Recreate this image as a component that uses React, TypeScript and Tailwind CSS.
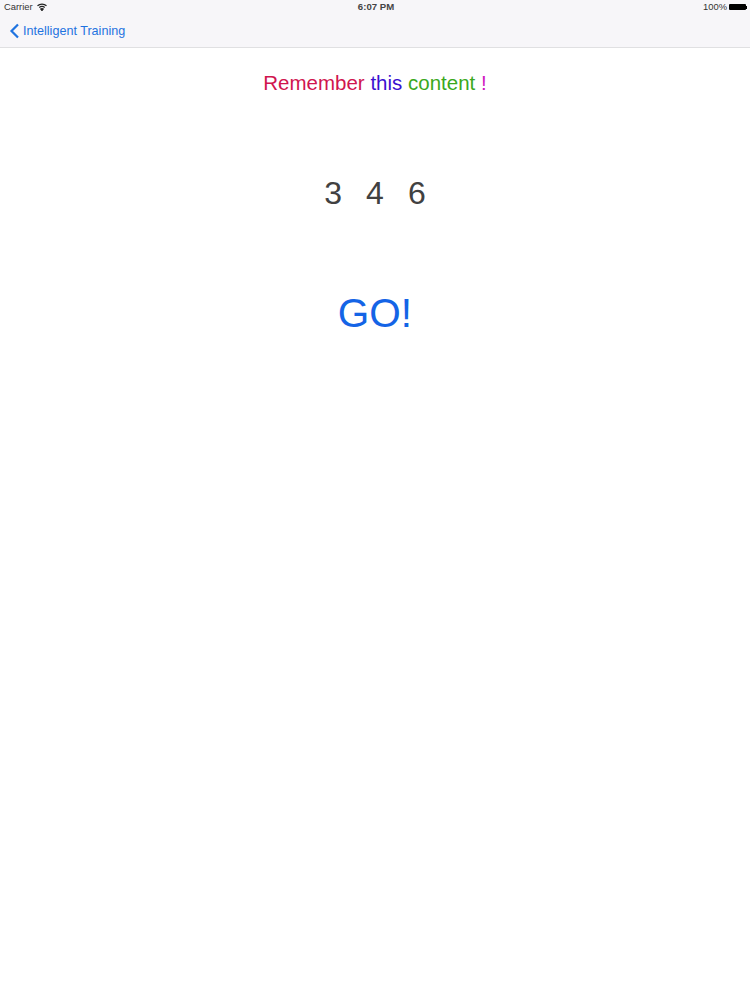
export default function App() {
  return (
    <div className="min-h-[1000px] bg-white font-['Liberation_Sans',sans-serif]">
      <div className="h-[48px] bg-[#f7f6f9] border-b border-[#e0e0e2]">
        <div className="relative flex h-[15px] items-center justify-between pl-[4px] pr-[3px] text-[9.4px] text-[#333]">
          <div className="flex items-center gap-[4px]">
            <span>Carrier</span>
            <svg width="10" height="8" viewBox="0 0 20 16" fill="none" stroke="#222" strokeWidth="2.4">
              <path d="M1 5.5 C6 1 14 1 19 5.5" />
              <path d="M4.5 9 C7.5 6.5 12.5 6.5 15.5 9" />
              <path d="M10 15 L7.5 12 C9 11 11 11 12.5 12 Z" fill="#222" />
            </svg>
          </div>
          <span className="absolute left-0 right-0 pl-[2px] text-center text-[9.6px] font-bold text-[#444]">6:07 PM</span>
          <div className="flex items-center gap-[2px]">
            <span>100%</span>
            <div className="h-[6px] w-[17px] rounded-[1px] bg-black" />
            <div className="-ml-[2px] h-[3px] w-[1px] bg-black" />
          </div>
        </div>
        <div className="flex h-[32px] items-center pl-[9px] text-[#1f73e0]">
          <svg width="11" height="16" viewBox="0 0 11 16" fill="none" stroke="#1f73e0" strokeWidth="2.2">
            <path d="M9 1.5 L2.5 8 L9 14.5" />
          </svg>
          <span className="ml-[3px] text-[12.6px]">Intelligent Training</span>
        </div>
      </div>
      <div className="flex flex-col items-center">
        <div className="mt-[22px] h-[25px] text-[20.5px] leading-[25px] whitespace-pre">
          <span className="text-[#d0154e]">Remember</span>
          <span> </span>
          <span className="text-[#3a10d0]">this</span>
          <span> </span>
          <span className="text-[#3aa81c]">content</span>
          <span> </span>
          <span className="text-[#d018c0]">!</span>
        </div>
        <div className="mt-[78px] flex h-[40px] gap-[24px] text-[32px] leading-[40px] text-[#414141]">
          <span>3</span>
          <span>4</span>
          <span>6</span>
        </div>
        <div className="mt-[75px] text-[40.5px] leading-[50px] text-[#1464e6]">GO!</div>
      </div>
    </div>
  );
}
